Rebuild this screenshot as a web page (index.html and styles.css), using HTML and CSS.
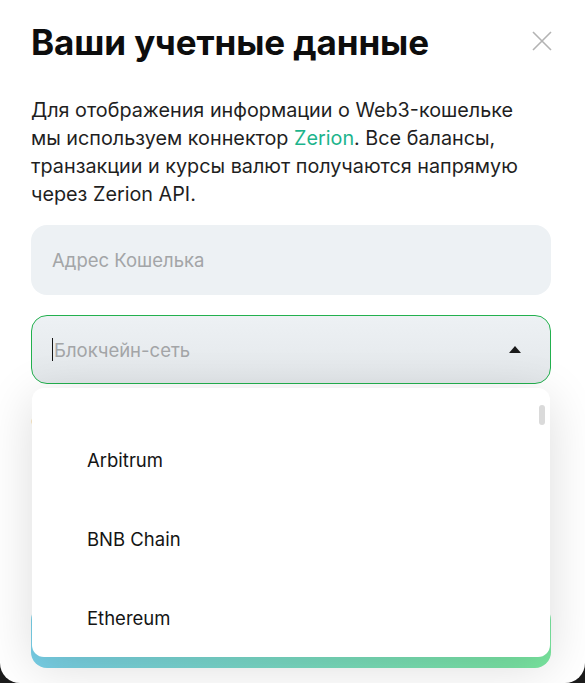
FILE: index.html
```html
<!DOCTYPE html>
<html lang="ru">
<head>
<meta charset="utf-8">
<title>Ваши учетные данные</title>
<link rel="stylesheet" href="styles.css">
</head>
<body>
<div class="modal">
  <div class="header">
    <h1 class="title">Ваши учетные данные</h1>
    <button class="close" aria-label="Закрыть">
      <svg width="20" height="20" viewBox="0 0 20 20"><path d="M1 1L19 19M19 1L1 19" stroke="#b3b3b3" stroke-width="1.6" fill="none"/></svg>
    </button>
  </div>
  <p class="desc">Для отображения информации о Web3-кошельке мы используем коннектор <a class="link">Zerion</a>. Все балансы, транзакции и курсы валют получаются напрямую через Zerion API.</p>
  <div class="field">Адрес Кошелька</div>
  <div class="select-wrap">
    <div class="select">
      <span class="caret"></span><span class="ph">Блокчейн-сеть</span>
      <svg class="arrow" width="12" height="7" viewBox="0 0 12 7"><path d="M6 0L12 7H0Z" fill="#1a1a1a"/></svg>
    </div>
    <div class="menu">
      <div class="item">Arbitrum</div>
      <div class="item">BNB Chain</div>
      <div class="item">Ethereum</div>
      <span class="thumb"></span>
    </div>
  </div>
  <div class="note">Обновление данных может занять некоторое время</div>
  <button class="submit">Сохранить</button>
</div>
</body>
</html>
```

FILE: styles.css
```css
* { box-sizing: border-box; }
html, body { margin: 0; height: 100%; }
body {
  background: #1c1c1c;
  font-family: Inter, "Noto Sans", sans-serif;
  overflow: hidden;
}
.modal {
  width: 585px;
  height: 683px;
  background: #fff;
  border-radius: 0 0 20px 20px;
  padding: 20px 34px 0 31px;
  display: flex;
  flex-direction: column;
}
.header {
  display: flex;
  align-items: center;
  justify-content: space-between;
}
.title {
  margin: 0;
  font-size: 35px;
  line-height: 44px;
  font-weight: 700;
  color: #0d0d0d;
  letter-spacing: -0.1px;
}
.close {
  border: 0;
  background: none;
  padding: 0;
  width: 20px;
  height: 20px;
  margin-right: -1px;
  margin-top: -2px;
  display: flex;
}
.desc {
  margin: 32px 0 0;
  max-width: 500px;
  font-size: 19.8px;
  line-height: 28px;
  color: #1f1f1f;
}
.link { color: #1db48c; }
.field {
  margin-top: 17px;
  height: 70px;
  border-radius: 16px;
  background: #edf1f4;
  padding: 0 21px;
  display: flex;
  align-items: center;
  font-size: 18.5px;
  color: #a3a5a7;
}
.select-wrap {
  position: relative;
  margin-top: 20px;
}
.select {
  height: 69px;
  border: 1px solid #22b04e;
  border-radius: 16px;
  background: linear-gradient(#edf1f4, #e3e7ea);
  padding: 0 29px 0 20px;
  display: flex;
  align-items: center;
  font-size: 18.5px;
  color: #a3a5a7;
}
.caret {
  width: 1px;
  height: 23px;
  background: #111;
  margin-right: 1px;
}
.ph { flex: 1; }
.menu {
  position: absolute;
  left: 1px;
  right: 1px;
  top: 73px;
  height: 269px;
  background: #fff;
  border-radius: 12px;
  box-shadow: 0 10px 50px rgba(0, 0, 0, 0.14);
  padding: 32px 0 0 55px;
  z-index: 2;
}
.item {
  height: 80px;
  line-height: 80px;
  font-size: 18.5px;
  color: #141414;
  margin-top: -1px;
}
.item:first-child { margin-top: 0; }
.thumb {
  position: absolute;
  right: 5px;
  top: 17px;
  width: 6px;
  height: 20px;
  border-radius: 3px;
  background: #dadada;
}
.note {
  margin-top: 28px;
  font-size: 15px;
  color: #8b8b8b;
}
.submit {
  margin-top: auto;
  margin-bottom: 15px;
  height: 64px;
  width: 100%;
  border: 0;
  border-radius: 16px;
  background: linear-gradient(90deg, #79d0e8, #7ae7a0);
  color: #fff;
  font-family: inherit;
  font-size: 18px;
  font-weight: 600;
}
```
